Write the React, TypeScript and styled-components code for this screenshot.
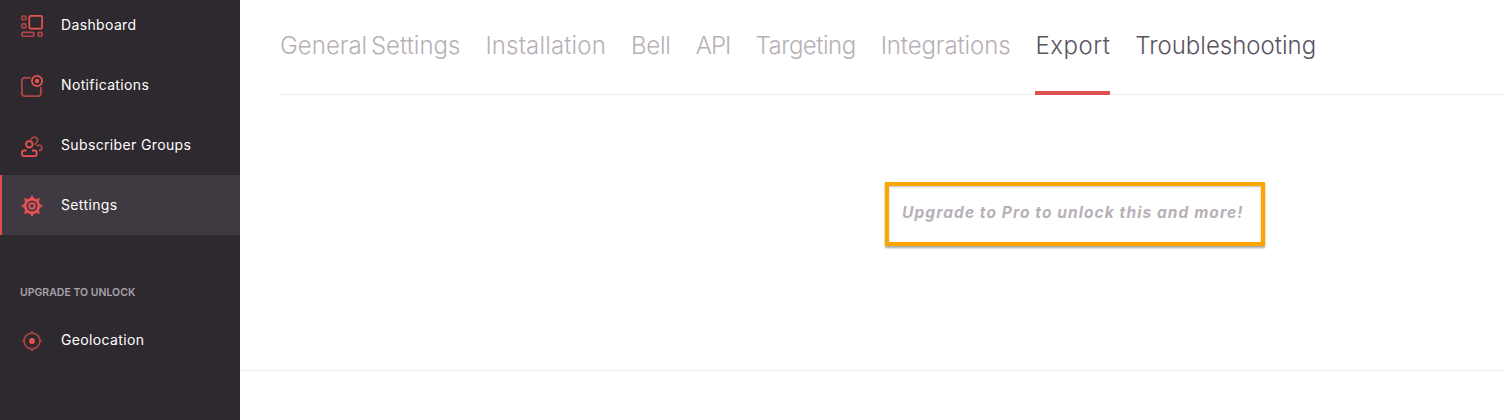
import React from 'react';
import styled, { createGlobalStyle } from 'styled-components';

const Global = createGlobalStyle`
    html, body {
        margin: 0;
        padding: 0;
        height: 420px;
        overflow: hidden;
        background: #fff;
    }
    #root {
        height: 420px;
    }
`

const Page = styled.div`
    display: flex;
    height: 420px;
    font-family: Inter, "Liberation Sans", sans-serif;
`

const Sidebar = styled.aside`
    width: 240px;
    flex-shrink: 0;
    background: #2d292e;
    overflow: hidden;
`

const NavList = styled.nav`
    margin-top: -5px;
    display: flex;
    flex-direction: column;
`

const NavItem = styled.a<{ $active?: boolean }>`
    height: 60px;
    box-sizing: border-box;
    padding-bottom: 2px;
    display: flex;
    align-items: center;
    gap: 18px;
    border-left: ${p => (p.$active ? '2px solid #e05050' : '0')};
    padding-left: ${p => (p.$active ? '19px' : '21px')};
    background: ${p => (p.$active ? '#3f3a41' : 'transparent')};
    color: #fff;
    font-size: 14px;
    font-weight: 400;
    letter-spacing: 0.36px;
    svg {
        width: 22px;
        height: 22px;
        flex-shrink: 0;
        margin-top: 4px;
    }
`

const SectionLabel = styled.div`
    margin: 50px 0 10px;
    padding-left: 20px;
    height: 15px;
    line-height: 15px;
    color: #a8a1a9;
    font-size: 10.5px;
    font-weight: 600;
`

const Main = styled.main`
    flex: 1;
    display: flex;
    flex-direction: column;
`

const Tabs = styled.div`
    margin-left: 40px;
    height: 94px;
    display: flex;
    gap: 25px;
    border-bottom: 1px solid #eeeeee;
`

const Tab = styled.a<{ $state?: 'active' | 'dark'; $tracking?: number }>`
    height: 95px;
    box-sizing: border-box;
    padding-top: 30px;
    line-height: 32px;
    font-size: 24px;
    font-weight: 300;
    letter-spacing: ${p => p.$tracking ?? 0}px;
    word-spacing: -3px;
    color: ${p => (p.$state ? '#5a5360' : '#b8b0b8')};
    border-bottom: ${p => (p.$state === 'active' ? '4px solid #e05252' : '0')};
`

const Content = styled.section`
    height: 276px;
    box-sizing: border-box;
    padding: 87px 0 0 645px;
    border-bottom: 1px solid #eeeeee;
`

const UpgradeBox = styled.div`
    width: 380px;
    height: 64px;
    box-sizing: border-box;
    border: 4px solid #ffa500;
    box-shadow: 0 2px 2px rgba(0, 0, 0, 0.35), inset 0 1px 2px rgba(0, 0, 0, 0.25);
    display: flex;
    align-items: center;
    padding: 0 0 4px 13px;
    color: #b8b0b8;
    font-size: 15.5px;
    font-weight: 700;
    font-style: italic;
    letter-spacing: 1.08px;
    white-space: nowrap;
`

function DashboardIcon() {
    return (
        <svg viewBox="0 0 22 22" fill="none" stroke="#ea5252" strokeWidth="1.7">
            <rect x="8.3" y="0.9" width="12.8" height="12.8" rx="1.4" />
            <g opacity="0.7">
                <rect x="0.9" y="1" width="4" height="4" rx="1.4" />
                <rect x="0.9" y="8.9" width="4" height="4" rx="1.4" />
                <rect x="0.9" y="17.3" width="12" height="4" rx="1.4" />
                <rect x="17.1" y="17.3" width="4" height="4" rx="1.4" />
            </g>
        </svg>
    );
}

function NotificationIcon() {
    return (
        <svg viewBox="0 0 22 22" fill="none" stroke="#ea5252" strokeWidth="1.8">
            <path opacity="0.7" d="M9.5 2.9H3.4A2.5 2.5 0 0 0 .9 5.4v13.2A2.5 2.5 0 0 0 3.4 21.1h14a2.5 2.5 0 0 0 2.5-2.5V12" />
            <circle cx="16" cy="6" r="5.1" />
            <circle cx="16" cy="6" r="1.3" fill="#ea5252" />
        </svg>
    );
}

function SubscriberIcon() {
    return (
        <svg viewBox="0 0 22 22" fill="none" stroke="#ea5252" strokeWidth="1.8">
            <circle cx="8.3" cy="9.3" r="3.2" />
            <path d="M5.5 15.5H3a2.1 2.1 0 0 0-2.1 2.1v1.4A2.1 2.1 0 0 0 3 21.1h10.5a2.1 2.1 0 0 0 2.1-2.1v-1.4a2.1 2.1 0 0 0-2.1-2.1H11" />
            <path opacity="0.65" d="M10 5.2a3.3 3.3 0 1 1 5 3c-.7.5-1 1-1 1.9" />
            <path opacity="0.65" d="M16 11.5a2.6 2.6 0 0 1 4.9 1.2c0 1.7-1.3 2.7-3 2.7" />
        </svg>
    );
}

function GearIcon() {
    const teeth = [0, 45, 90, 135, 180, 225, 270, 315];
    return (
        <svg viewBox="0 0 24 24" fill="none" stroke="#ea5252">
            {teeth.map(deg => (
                <path key={deg} d="M10.2 3.8 12 .6l1.8 3.2z" fill="#ea5252" strokeWidth="0.8" transform={`rotate(${deg} 12 12)`} />
            ))}
            <circle cx="12" cy="12" r="7.4" strokeWidth="2.8" />
            <circle cx="12" cy="12" r="3" strokeWidth="2" />
        </svg>
    );
}

function GeoIcon() {
    return (
        <svg viewBox="0 0 24 24" fill="none" stroke="#ea5252" strokeWidth="1.9">
            <g opacity="0.65">
                <circle cx="12" cy="12" r="8.6" />
                <path d="M12 1v3M12 20v3M1 12h3M20 12h3" />
            </g>
            <circle cx="12" cy="12" r="3.2" fill="#ea5252" stroke="none" />
        </svg>
    );
}

const tabs = [
    { label: 'General Settings', tracking: 0 },
    { label: 'Installation', tracking: 0.15 },
    { label: 'Bell', tracking: -0.25 },
    { label: 'API', tracking: -0.9 },
    { label: 'Targeting', tracking: -0.5 },
    { label: 'Integrations', tracking: -0.1 },
];

export default function App() {
    return (
        <Page>
            <Global />
            <Sidebar>
                <NavList>
                    <NavItem><DashboardIcon />Dashboard</NavItem>
                    <NavItem><NotificationIcon />Notifications</NavItem>
                    <NavItem><SubscriberIcon />Subscriber Groups</NavItem>
                    <NavItem $active><GearIcon />Settings</NavItem>
                    <SectionLabel>UPGRADE TO UNLOCK</SectionLabel>
                    <NavItem><GeoIcon />Geolocation</NavItem>
                </NavList>
            </Sidebar>
            <Main>
                <Tabs>
                    {tabs.map(t => <Tab key={t.label} $tracking={t.tracking}>{t.label}</Tab>)}
                    <Tab $state="active" $tracking={0.5}>Export</Tab>
                    <Tab $state="dark">Troubleshooting</Tab>
                </Tabs>
                <Content>
                    <UpgradeBox>Upgrade to Pro to unlock this and more!</UpgradeBox>
                </Content>
            </Main>
        </Page>
    );
}
